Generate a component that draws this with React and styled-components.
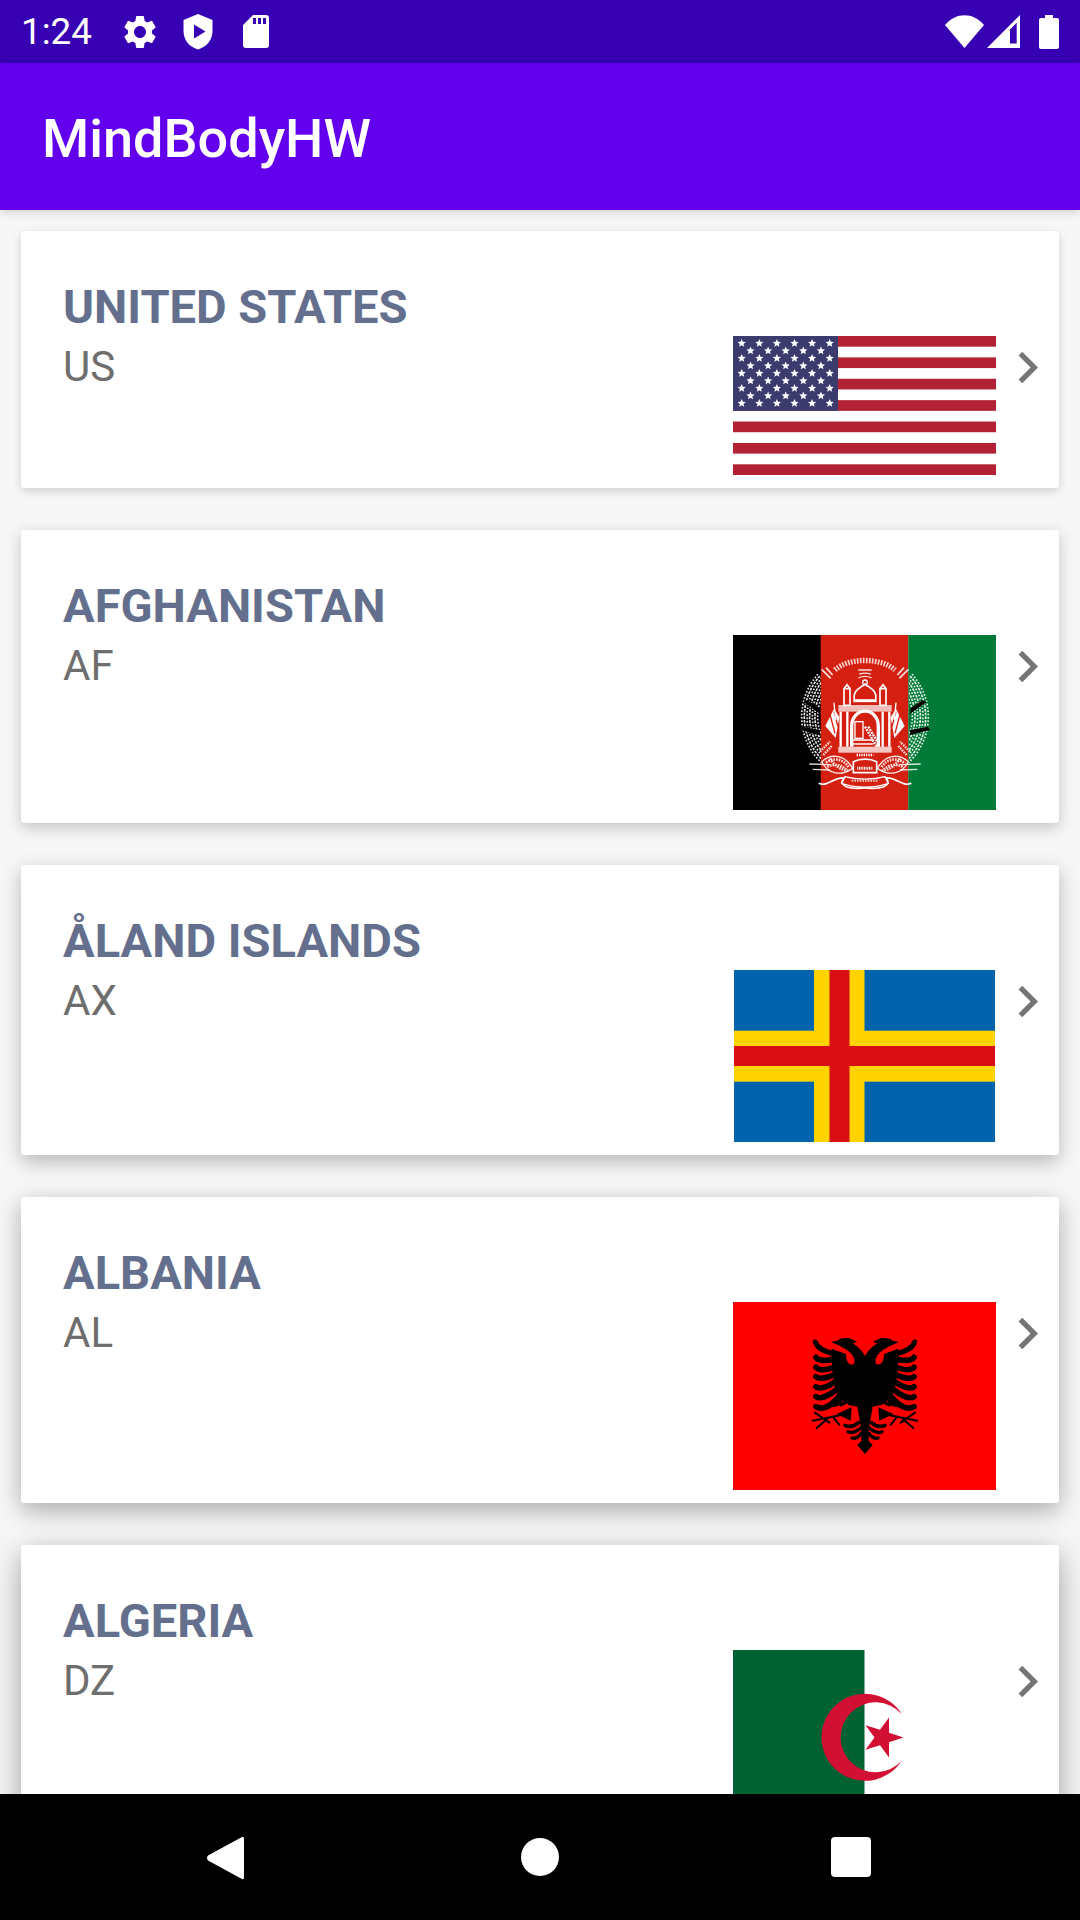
import React from 'react';
import styled, { createGlobalStyle } from 'styled-components';

const Global = createGlobalStyle`
  html, body { margin: 0; padding: 0; background: #f7f7f7; }
  #root { width: 1080px; height: 1920px; }
`;

const Screen = styled.div`
  width: 1080px;
  height: 1920px;
  display: flex;
  flex-direction: column;
  overflow: hidden;
  font-family: Roboto, "Liberation Sans", sans-serif;
  background: #f7f7f7;
`;
const StatusBar = styled.div`
  height: 63px;
  flex: none;
  background: #3700b3;
  display: flex;
  align-items: center;
  padding: 0 21px 0 21px;
  color: #fff;
`;
const Clock = styled.span`
  font-size: 36.75px;
  width: 99px;
`;
const StatusIcon = styled.svg`
  display: block;
  flex: none;
  fill: #fff;
  margin-left: ${p => p.$ml || 0}px;
`;
const Spacer = styled.div`
  flex: 1;
`;
const AppBar = styled.header`
  height: 147px;
  flex: none;
  box-sizing: border-box;
  background: #6200ee;
  display: flex;
  align-items: center;
  padding: 3px 0 0 42px;
  color: #fff;
  font-size: 54px;
  font-weight: 500;
  box-shadow: 0 3px 8px rgba(0, 0, 0, 0.14);
  position: relative;
  z-index: 1;
`;
const List = styled.main`
  flex: 1;
  min-height: 0;
  overflow: hidden;
  display: flex;
  flex-direction: column;
  gap: 42px;
  padding: 21px 21px 0;
`;
const Card = styled.article`
  flex: none;
  display: flex;
  justify-content: space-between;
  background: #fff;
  border-radius: 3px;
  box-shadow: 0 ${p => 3 + p.$level * 1.6}px ${p => 10 + p.$level * 5}px
    rgba(0, 0, 0, ${p => 0.16 + p.$level * 0.05});
`;
const Info = styled.div`
  padding: 48px 0 0 42px;
`;
const Name = styled.div`
  color: #636f8d;
  font-size: 47.1px;
  font-weight: 700;
  line-height: 55px;
`;
const Code = styled.div`
  color: #6e6e6e;
  font-size: 42px;
  line-height: 49px;
  margin-top: 8px;
`;
const Right = styled.div`
  display: flex;
  align-items: flex-start;
  padding: 105px 0 13px;
`;
const FlagBox = styled.div`
  width: 263px;
  display: flex;
  justify-content: center;
`;
const Flag = styled.svg`
  display: block;
`;
const Chevron = styled.svg`
  display: block;
  width: 63px;
  height: 63px;
  fill: #757575;
`;
const NavBar = styled.nav`
  height: 126px;
  flex: none;
  background: #000;
  display: flex;
  position: relative;
  z-index: 1;
`;
const NavSlot = styled.div`
  position: absolute;
  left: ${p => p.$x}px;
  top: ${p => p.$y}px;
`;
const NavGlyph = styled.svg`
  display: block;
  fill: #fff;
`;

const starPts = (cx, cy, r, rot = -90, ratio = 0.382) => {
  const out = [];
  for (let i = 0; i < 10; i++) {
    const a = ((rot + i * 36) * Math.PI) / 180;
    const rr = i % 2 ? r * ratio : r;
    out.push(`${(cx + rr * Math.cos(a)).toFixed(2)},${(cy + rr * Math.sin(a)).toFixed(2)}`);
  }
  return out.join(' ');
};

const USFlag = () => {
  const h = 139 / 13;
  const stripes = [];
  for (let i = 0; i < 13; i += 2) stripes.push(<rect key={i} x="0" y={i * h} width="263" height={h} fill="#b22234" />);
  const stars = [];
  for (let r = 0; r < 9; r++) {
    const n = r % 2 ? 5 : 6;
    for (let c = 0; c < n; c++) {
      const x = 8.7 + 17.6 * c + (r % 2 ? 8.8 : 0);
      const y = 7.3 + 7.5 * r;
      stars.push(<polygon key={`${r}-${c}`} points={starPts(x, y, 4.3, -90, 0.45)} fill="#fff" />);
    }
  }
  return (
    <Flag width="263" height="139" viewBox="0 0 263 139">
      <rect width="263" height="139" fill="#fff" />
      {stripes}
      <rect width="105" height="74.8" fill="#3c3b6e" />
      {stars}
    </Flag>
  );
};

const arc = (r, a0, a1, cx = 435, cy = 290) => {
  const p = a => [cx + r * Math.cos((a * Math.PI) / 180), cy + r * Math.sin((a * Math.PI) / 180)];
  const [x0, y0] = p(a0);
  const [x1, y1] = p(a1);
  return `M${x0.toFixed(1)} ${y0.toFixed(1)} A${r} ${r} 0 0 0 ${x1.toFixed(1)} ${y1.toFixed(1)}`;
};

const wreathRadii = [142, 150, 158, 166, 174, 182, 190];

const WreathSide = () => (
  <g fill="none" stroke="#fff">
    <g clipPath="url(#afStripe)">
      {wreathRadii.map((r, i) => (
        <path key={r} d={arc(r, 222, 132)} strokeWidth="5" strokeDasharray={i % 2 ? '8 3' : '5 5'} opacity=".9" />
      ))}
    </g>
    <path d="M250 246 L 300 282 L 298 264 L 262 240 Z" fill="#000" stroke="none" />
    <path d="M240 330 L 300 345 L 300 330 L 246 320 Z" fill="#000" stroke="none" />
    <path d="M305 148 L 332 175 M318 143 L 338 165" strokeWidth="5" opacity=".85" />
    <path d="M300 395 L 330 365 M310 405 L 335 378" strokeWidth="7" strokeDasharray="5 3" opacity=".85" />
    <path d="M268 432 L 330 434 M278 448 L 330 450" strokeWidth="4" opacity=".85" />
    <path d="M305 425 C 335 398 375 405 398 445 C 365 468 325 465 305 425 Z" fill="none" strokeWidth="4" opacity=".9" />
    <path d="M318 428 C 340 412 370 416 386 442 M322 440 C 345 430 365 435 380 450 M330 415 C 345 440 365 450 385 452" strokeWidth="8" strokeDasharray="5 3" opacity=".85" />
    <path d="M296 490 C 322 502 345 470 372 474 C 352 498 385 508 435 504" strokeWidth="5" />
    <path d="M347 354 L 316 318 L 342 266 L 358 292 Z" fill="#fff" stroke="none" />
    <path d="M330 283 L 345 340 M342 275 L 354 320" stroke="#d32011" strokeWidth="4" />
    <path d="M342 248 L 347 300" strokeWidth="4" />
    <rect x="372" y="206" width="18" height="50" strokeWidth="5" />
    <path d="M372 206 L 381 194 L 390 206" strokeWidth="5" />
  </g>
);

const AFFlag = () => (
  <Flag width="263" height="175" viewBox="0 0 263 175">
    <defs>
      <clipPath id="afStripe">
        <rect x="200" y="140" width="103" height="300" />
      </clipPath>
    </defs>
    <rect width="88" height="175" fill="#000" />
    <rect x="87.7" width="87.7" height="175" fill="#d32011" />
    <rect x="175.3" width="87.7" height="175" fill="#007a36" />
    <g transform="translate(-13 -15) scale(.33333)">
      <WreathSide />
      <g transform="translate(870 0) scale(-1 1)">
        <WreathSide />
      </g>
      <g fill="none" stroke="#fff">
        <path d="M345 150 C 385 112 485 112 525 150" strokeWidth="16" strokeDasharray="5 4" opacity=".8" />
        <path d="M415 150 L 455 150 M418 162 C 430 158 440 158 452 162 M415 174 C 430 167 440 167 455 174" strokeWidth="4" opacity=".85" />
        <path d="M403 240 C 398 210 420 205 435 192 C 450 205 472 210 467 240 Z" strokeWidth="5" />
        <circle cx="435" cy="187" r="7" strokeWidth="4" />
        <path d="M400 243 L 470 243" strokeWidth="7" />
        <rect x="355" y="255" width="160" height="20" fill="#fff" stroke="none" opacity=".7" />
        <path d="M362 275 L 362 380 M382 275 L 382 380 M488 275 L 488 380 M508 275 L 508 380" strokeWidth="7" />
        <path d="M395 380 L 395 320 C 395 258 475 258 475 320 L 475 380" strokeWidth="10" />
        <rect x="405" y="305" width="24" height="50" strokeWidth="4" />
        <path d="M435 320 L 470 380 M445 320 L 472 365" strokeWidth="7" strokeDasharray="6 3" />
        <path d="M395 360 L 460 360 M395 372 L 460 372" strokeWidth="4" />
        <rect x="355" y="380" width="160" height="18" fill="#fff" stroke="none" opacity=".75" />
        <path d="M410 405 L 460 405" strokeWidth="7" strokeDasharray="4 3" />
        <path d="M400 425 C 420 415 450 415 470 425 L 470 458 L 400 458 Z" strokeWidth="5" />
        <path d="M412 445 L 458 445" strokeWidth="9" strokeDasharray="3 2" />
        <path d="M375 470 C 410 480 460 480 495 470 L 505 490 C 460 505 410 505 365 490 Z" strokeWidth="4" />
        <path d="M395 482 L 475 482" strokeWidth="6" strokeDasharray="5 3" opacity=".75" />
      </g>
    </g>
  </Flag>
);

const AXFlag = () => (
  <Flag width="261" height="172" viewBox="0 0 261 172">
    <rect width="261" height="172" fill="#0064ad" />
    <rect x="80" width="50.5" height="172" fill="#ffd300" />
    <rect y="60.7" width="261" height="51" fill="#ffd300" />
    <rect x="95.5" width="20" height="172" fill="#da0e15" />
    <rect y="76" width="261" height="20" fill="#da0e15" />
  </Flag>
);

const EagleHalf = () => (
  <g>
    <path
      d="M435 492 L 412 465 L 424 452 L 424 420 L 418 385 L 412 350 L 385 345 L 355 320 C 340 290 335 240 335 176 L 378 192 C 378 215 388 228 402 222 C 408 205 395 188 375 176 L 355 166 L 333 156 L 352 152 L 360 146 L 385 143 L 412 155 L 398 160 C 415 170 428 185 435 198 Z"
      fill="#000"
    />
    <g fill="none" stroke="#000" strokeLinecap="round">
      <path d="M286 156 C 292 175 312 184 342 192" strokeWidth="15" />
      <path d="M288 202 C 296 214 318 212 342 208" strokeWidth="17" />
      <path d="M288 232 C 296 242 318 240 342 232" strokeWidth="17" />
      <path d="M288 260 C 296 268 318 266 342 254" strokeWidth="17" />
      <path d="M288 290 C 298 298 320 294 344 276" strokeWidth="17" />
      <path d="M288 320 C 300 328 325 320 350 298" strokeWidth="17" />
      <path d="M288 350 C 305 360 330 352 360 316" strokeWidth="17" />
      <path d="M340 347 C 352 345 364 335 368 318" strokeWidth="10" />
      <path d="M362 344 C 374 340 384 332 386 320" strokeWidth="10" />
      <path d="M375 406 C 388 412 402 410 416 398" strokeWidth="11" />
      <path d="M384 425 C 394 430 408 426 422 414" strokeWidth="10" />
      <path d="M396 444 C 404 447 414 442 424 430" strokeWidth="10" />
      <path d="M278 392 L 360 376 M285 368 L 328 398 M290 414 L 322 386 M338 380 L 358 404" strokeWidth="6" />
    </g>
    <path d="M350 372 L 395 352 L 392 392 Z" fill="#000" />
  </g>
);

const ALFlag = () => (
  <Flag width="263" height="188" viewBox="0 0 263 188">
    <rect width="263" height="188" fill="#ff0000" />
    <g transform="translate(-13 -12) scale(.33333)">
      <EagleHalf />
      <g transform="translate(870 0) scale(-1 1)">
        <EagleHalf />
      </g>
    </g>
  </Flag>
);

const DZFlag = () => (
  <Flag width="263" height="175" viewBox="0 0 263 175">
    <rect width="263" height="175" fill="#fff" />
    <rect width="131.5" height="175" fill="#006233" />
    <path d="M168.7 64 A43.5 43.5 0 1 0 168.7 110.7 A35 35 0 1 1 168.7 64Z" fill="#d21034" />
    <polygon points={starPts(149.5, 87.5, 21, 0)} fill="#d21034" />
  </Flag>
);

const countries = [
  { name: 'UNITED STATES', code: 'US', flag: <USFlag /> },
  { name: 'AFGHANISTAN', code: 'AF', flag: <AFFlag /> },
  { name: 'ÅLAND ISLANDS', code: 'AX', flag: <AXFlag /> },
  { name: 'ALBANIA', code: 'AL', flag: <ALFlag /> },
  { name: 'ALGERIA', code: 'DZ', flag: <DZFlag /> },
];

export default function App() {
  return (
    <Screen>
      <Global />
      <StatusBar>
        <Clock>1:24</Clock>
        <StatusIcon width="40" height="40" viewBox="0 0 24 24">
          <path d="M19.14 12.94c.04-.3.06-.61.06-.94 0-.32-.02-.64-.07-.94l2.03-1.58c.18-.14.23-.41.12-.61l-1.92-3.32c-.12-.22-.37-.29-.59-.22l-2.39.96c-.5-.38-1.03-.7-1.62-.94l-.36-2.54c-.04-.24-.24-.41-.48-.41h-3.84c-.24 0-.43.17-.47.41l-.36 2.54c-.59.24-1.13.57-1.62.94l-2.39-.96c-.22-.08-.47 0-.59.22L2.74 8.87c-.12.21-.08.47.12.61l2.03 1.58c-.05.3-.09.63-.09.94s.02.64.07.94l-2.03 1.58c-.18.14-.23.41-.12.61l1.92 3.32c.12.22.37.29.59.22l2.39-.96c.5.38 1.03.7 1.62.94l.36 2.54c.05.24.24.41.48.41h3.84c.24 0 .44-.17.47-.41l.36-2.54c.59-.24 1.13-.56 1.62-.94l2.39.96c.22.08.47 0 .59-.22l1.92-3.32c.12-.22.07-.47-.12-.61l-2.01-1.58zM12 15.6c-1.98 0-3.6-1.62-3.6-3.6s1.62-3.6 3.6-3.6 3.6 1.62 3.6 3.6-1.62 3.6-3.6 3.6z" />
        </StatusIcon>
        <StatusIcon $ml="23" width="30" height="36" viewBox="0 0 30 36">
          <path fillRule="evenodd" d="M15 0 L29.5 6 V17 C29.5 26 23.5 33 15 35.5 C6.5 33 0.5 26 0.5 17 V6 Z M11 10.5 V24.5 L22.5 17.5 Z" />
        </StatusIcon>
        <StatusIcon $ml="30" width="26" height="33" viewBox="0 0 26 33">
          <path fillRule="evenodd" d="M10 0 H23 A3 3 0 0 1 26 3 V30 A3 3 0 0 1 23 33 H3 A3 3 0 0 1 0 30 V10 Z M10 3 V9 H13 V3 Z M15 3 V9 H18 V3 Z M20 3 V9 H23 V3 Z" />
        </StatusIcon>
        <Spacer />
        <StatusIcon width="39" height="33" viewBox="0 0 39 33">
          <path d="M0 10 C11 -3 28 -3 39 10 L19.5 33 Z" />
        </StatusIcon>
        <StatusIcon $ml="3" width="33" height="33" viewBox="0 0 33 33">
          <path fillRule="evenodd" d="M33 0 V33 H0 Z M29.7 7.7 L23 14.4 V28.5 H29.7 Z" />
        </StatusIcon>
        <StatusIcon $ml="19" width="20" height="34" viewBox="0 0 20 34">
          <path d="M6 0 H14 V3 H18 A2 2 0 0 1 20 5 V32 A2 2 0 0 1 18 34 H2 A2 2 0 0 1 0 32 V5 A2 2 0 0 1 2 3 H6 Z" />
        </StatusIcon>
      </StatusBar>
      <AppBar>MindBodyHW</AppBar>
      <List>
        {countries.map((c, i) => (
          <Card key={c.code} $level={i}>
            <Info>
              <Name>{c.name}</Name>
              <Code>{c.code}</Code>
            </Info>
            <Right>
              <FlagBox>{c.flag}</FlagBox>
              <Chevron viewBox="0 0 24 24">
                <path d="M10 6L8.59 7.41 13.17 12l-4.58 4.59L10 18l6-6z" />
              </Chevron>
            </Right>
          </Card>
        ))}
      </List>
      <NavBar>
        <NavSlot $x="206" $y="42">
          <NavGlyph width="38" height="44" viewBox="0 0 38 44">
            <path d="M36 1 Q38 0 38 3 V41 Q38 44 36 43 L2 24.5 Q0 22 2 19.5 Z" />
          </NavGlyph>
        </NavSlot>
        <NavSlot $x="521" $y="44">
          <NavGlyph width="38" height="38" viewBox="0 0 38 38">
            <circle cx="19" cy="19" r="19" />
          </NavGlyph>
        </NavSlot>
        <NavSlot $x="831" $y="43">
          <NavGlyph width="40" height="40" viewBox="0 0 40 40">
            <rect width="40" height="40" rx="4" />
          </NavGlyph>
        </NavSlot>
      </NavBar>
    </Screen>
  );
}
